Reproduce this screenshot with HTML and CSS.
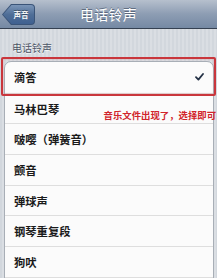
FILE: index.html
```html
<!DOCTYPE html>
<html lang="zh">
<head>
<meta charset="utf-8">
<link rel="stylesheet" href="styles.css">
</head>
<body>
<div class="screen">
  <div class="nav">
    <div class="nav-left">
      <div class="back"><div class="back-in">声音</div></div>
    </div>
    <div class="nav-title">电话铃声</div>
    <div class="nav-right"></div>
  </div>
  <div class="group-title">电话铃声</div>
  <div class="card">
    <div class="row"><span>滴答</span>
      <svg class="check" width="9" height="8" viewBox="0 0 9 8"><path d="M1 4.2 L3.4 6.6 L8 1" fill="none" stroke="#253246" stroke-width="1.8" stroke-linecap="round" stroke-linejoin="round"/></svg>
    </div>
    <div class="row"><span>马林巴琴</span></div>
    <div class="row"><span>啵嘤（弹簧音）</span></div>
    <div class="row"><span>颤音</span></div>
    <div class="row"><span>弹球声</span></div>
    <div class="row"><span>钢琴重复段</span></div>
    <div class="row"><span>狗吠</span></div>
    <div class="row"><span>&nbsp;</span></div>
  </div>
  <div class="highlight"></div>
  <div class="note">音乐文件出现了，选择即可</div>
</div>
</body>
</html>
```
FILE: styles.css
```css
html, body {
  margin: 0;
  padding: 0;
}
body {
  width: 217px;
  height: 278px;
  overflow: hidden;
  font-family: "Noto Sans CJK SC", "Noto Sans", sans-serif;
}
.screen {
  position: relative;
  width: 217px;
  height: 278px;
  overflow: hidden;
  background: repeating-linear-gradient(90deg, #d2d7dd 0 2px, #dadee3 2px 4px);
}
.nav {
  height: 28px;
  display: grid;
  grid-template-columns: 1fr auto 1fr;
  align-items: center;
  background: linear-gradient(#b6c0cd, #8d9db3 50%, #7589a4);
  border-bottom: 1px solid #354152;
}
.nav-left {
  display: flex;
  padding-left: 2px;
}
.back {
  width: 33px;
  height: 21px;
  padding: 1px;
  box-sizing: border-box;
  background: #3a5478;
  clip-path: polygon(0 50%, 9px 0, 100% 0, 100% 100%, 9px 100%);
  border-radius: 0 4px 4px 0;
  margin-top: 1px;
}
.back-in {
  height: 100%;
  background: linear-gradient(#7a95b8, #4f6e97 50%, #3f6090);
  clip-path: polygon(0 50%, 8.5px 0, 100% 0, 100% 100%, 8.5px 100%);
  border-radius: 0 3px 3px 0;
  color: #fff;
  font-size: 7.5px;
  font-weight: bold;
  display: flex;
  align-items: center;
  justify-content: center;
  padding-left: 5px;
  box-sizing: border-box;
  text-shadow: 0 -1px 0 rgba(0,0,0,0.4);
}
.nav-title {
  color: #fff;
  font-size: 14px;
  line-height: 16px;
  letter-spacing: 0.3px;
  text-shadow: 0 -1px 0 rgba(40,50,70,0.5);
  margin-top: -1px;
}
.group-title {
  margin: 13px 0 0 12px;
  font-size: 10px;
  line-height: 12px;
  color: #4d5566;
  text-shadow: 0 1px 0 rgba(255,255,255,0.7);
}
.card {
  margin: 7px 3px 0 4px;
  background: #fbfbfb;
  border: 1px solid #a8aeb6;
  border-radius: 7px;
  overflow: hidden;
}
.row {
  height: 30.7px;
  box-sizing: border-box;
  display: flex;
  align-items: center;
  justify-content: space-between;
  padding: 0 8px 0 9px;
  font-size: 11.3px;
  font-weight: bold;
  color: #1a1a1a;
}
.row + .row {
  border-top: 1px solid #dedede;
}
.check {
  margin-right: 1px;
}
.highlight {
  position: absolute;
  left: 1px;
  top: 57px;
  width: 215px;
  height: 39px;
  box-sizing: border-box;
  border: 2px solid #c9363c;
  border-radius: 2px;
  box-shadow: inset 0 0 2px rgba(220,80,90,0.5);
}
.note {
  position: absolute;
  left: 103.5px;
  top: 109px;
  font-size: 9.4px;
  line-height: 12px;
  font-weight: bold;
  color: #d1242b;
  white-space: nowrap;
}
```
